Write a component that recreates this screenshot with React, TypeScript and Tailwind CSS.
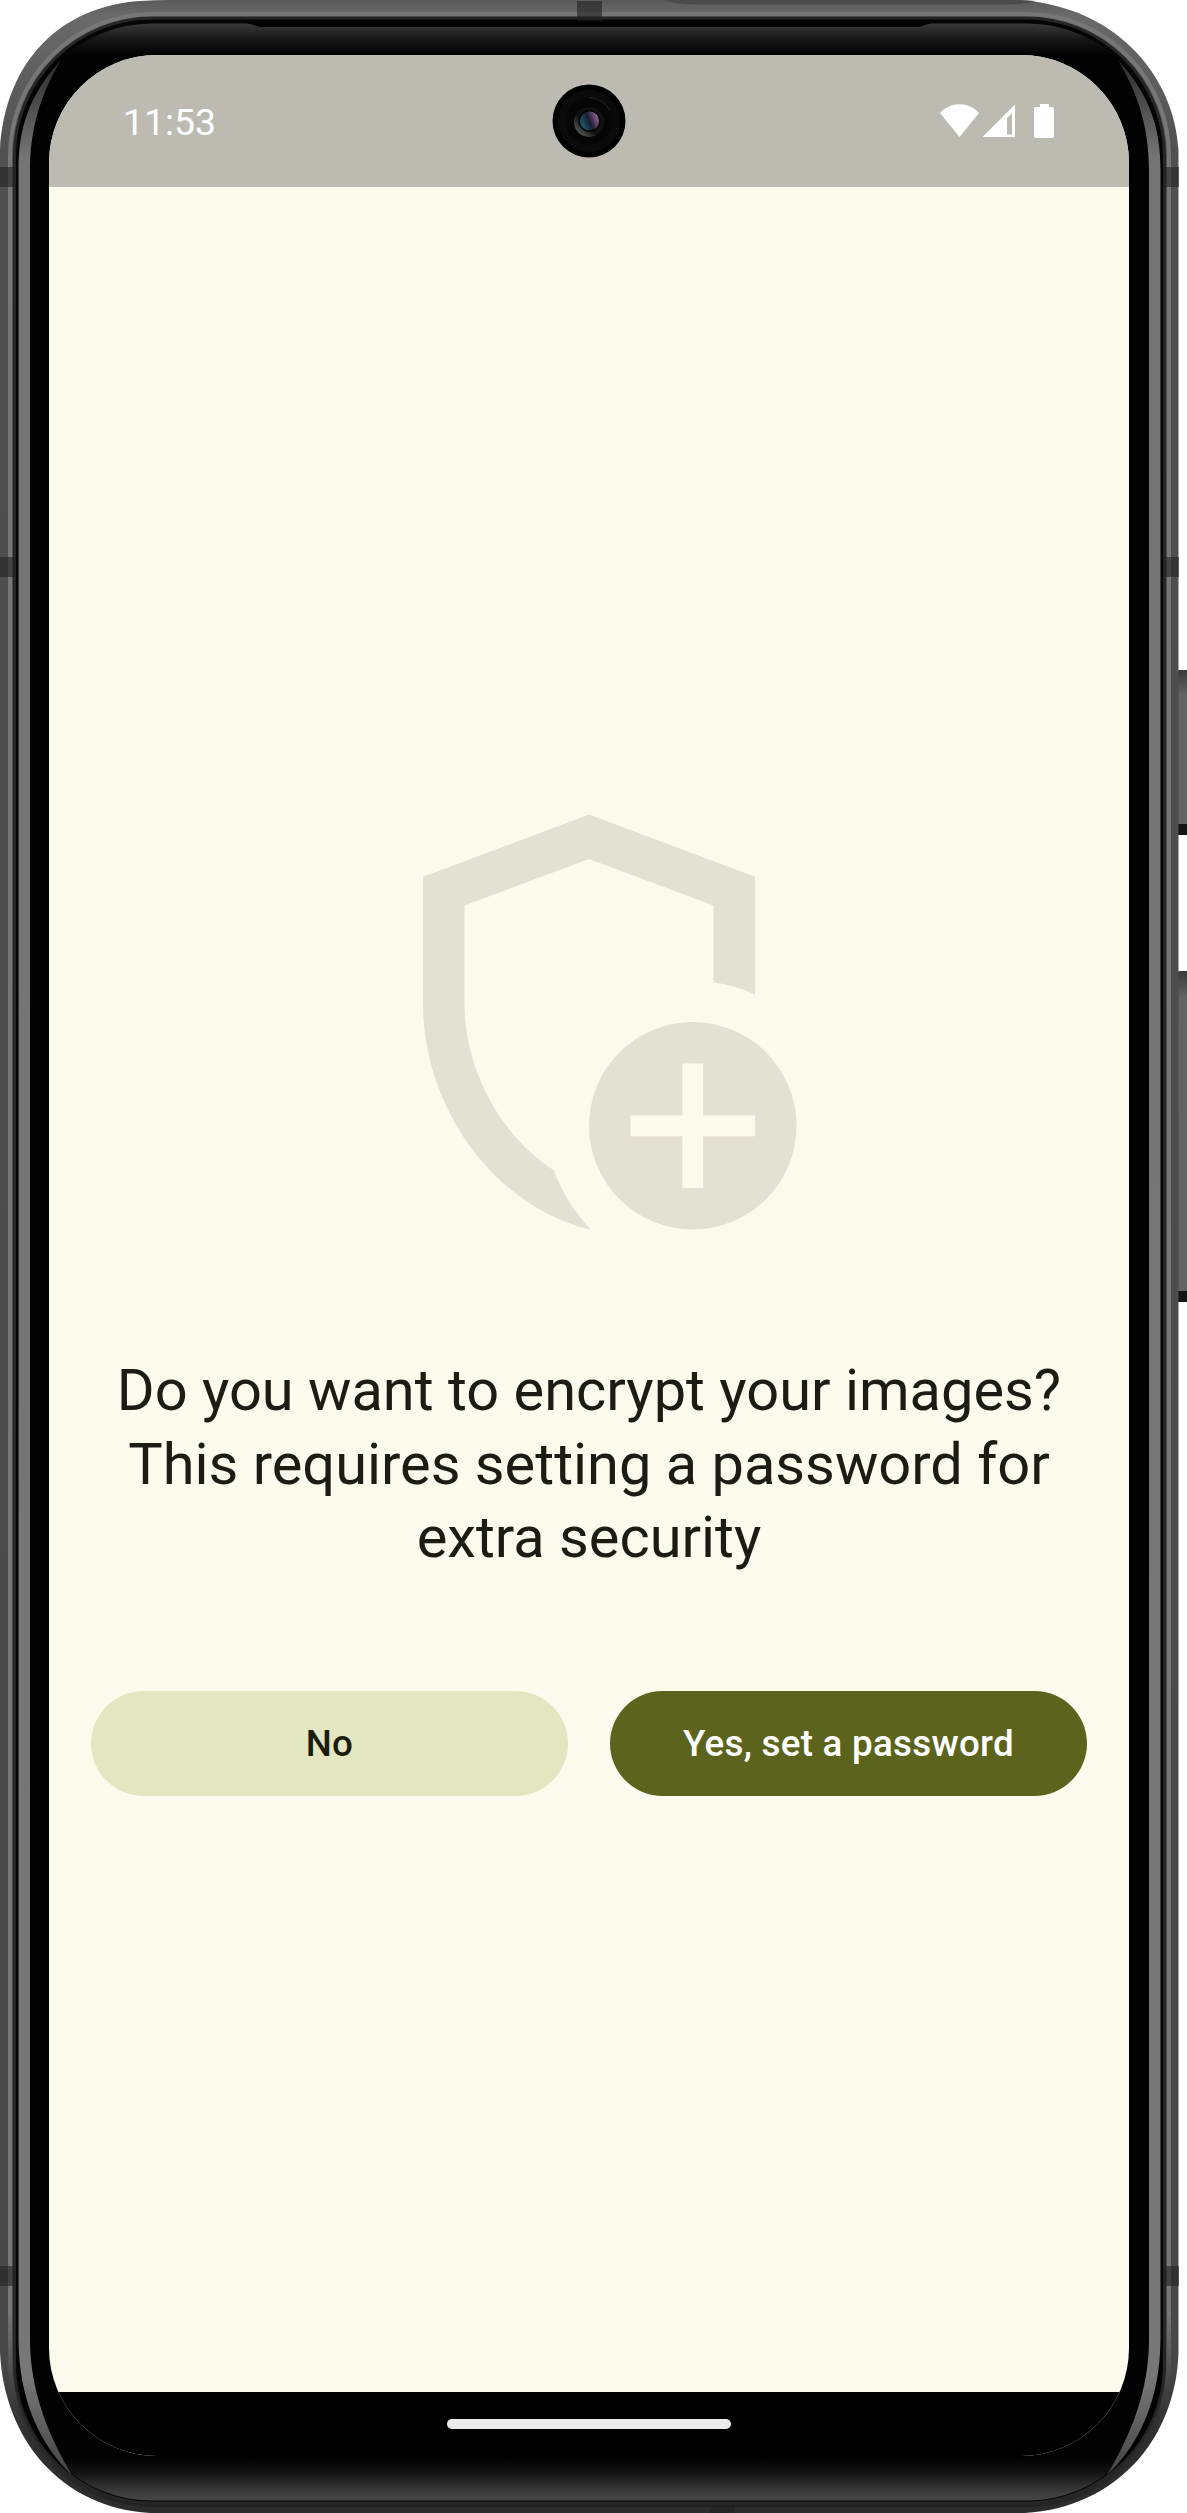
import React from "react";

const outer =
  "M140 1 Q155 0 170 0 H1015 Q1040 1 1060 7 C1130 26 1175 85 1178.5 150 V2352 C1176 2440 1115 2508 1025 2513 H150 C62 2508 4 2440 0 2352 V150 C5 60 62 6 140 1 Z";

function DeviceFrame() {
  return (
    <div className="absolute inset-0 overflow-hidden">
      <div className="absolute left-[1176px] top-[670px] h-[165px] w-[14px] rounded-[4px] bg-linear-to-b from-[#3a3a3a] via-[#636363] via-15% to-[#636363] to-90%" />
      <div className="absolute left-[1176px] top-[824px] h-[11px] w-[14px] bg-[#141414]" />
      <div className="absolute left-[1176px] top-[971px] h-[331px] w-[14px] rounded-[4px] bg-linear-to-b from-[#3a3a3a] via-[#636363] via-8% to-[#636363] to-95%" />
      <div className="absolute left-[1176px] top-[1291px] h-[11px] w-[14px] bg-[#141414]" />
      <svg width="1187" height="2513" viewBox="0 0 1187 2513" className="absolute left-0 top-0">
        <defs>
          <linearGradient id="rim" x1="0" x2="0" y1="0" y2="2513" gradientUnits="userSpaceOnUse">
            <stop offset="0" stopColor="#5a5a5a" />
            <stop offset="0.006" stopColor="#6a6a6a" />
            <stop offset="0.06" stopColor="#505050" />
            <stop offset="0.94" stopColor="#484848" />
            <stop offset="0.97" stopColor="#303030" />
            <stop offset="1" stopColor="#2c2c2c" />
          </linearGradient>
          <linearGradient id="line" x1="0" x2="0" y1="0" y2="2513" gradientUnits="userSpaceOnUse">
            <stop offset="0" stopColor="#777" />
            <stop offset="0.92" stopColor="#777" />
            <stop offset="0.96" stopColor="#333" />
            <stop offset="1" stopColor="#222" />
          </linearGradient>
          <linearGradient id="glass" x1="0" x2="0" y1="23" y2="2498" gradientUnits="userSpaceOnUse">
            <stop offset="0" stopColor="#3a3a3a" />
            <stop offset="0.007" stopColor="#151515" />
            <stop offset="0.013" stopColor="#020202" />
            <stop offset="0.984" stopColor="#020202" />
            <stop offset="0.99" stopColor="#141414" />
            <stop offset="0.995" stopColor="#303030" />
            <stop offset="1" stopColor="#444" />
          </linearGradient>
          <linearGradient id="shine" x1="0" x2="0" y1="60" y2="2475" gradientUnits="userSpaceOnUse">
            <stop offset="0" stopColor="#2c2c2c" />
            <stop offset="0.04" stopColor="#747474" />
            <stop offset="0.96" stopColor="#777" />
            <stop offset="1" stopColor="#444" />
          </linearGradient>
        </defs>
        <path d={outer} fill="url(#rim)" />
        <rect x="10" y="14" width="1159" height="2491" rx="142" fill="none" stroke="url(#line)" strokeWidth="4" />
        <rect x="14.5" y="18" width="1150" height="2485" rx="138" fill="#050505" stroke="#262626" strokeWidth="3" />
        <rect x="18" y="23.5" width="1143" height="2477" rx="134" fill="url(#glass)" />
        <path d="M61 60 C28 96 18.5 130 18.5 170 V2340 C19 2400 40 2445 72 2475 C48 2435 30 2390 30 2340 V170 C30 130 40 95 61 60Z" fill="url(#shine)" />
        <path d="M1118 60 C1151 96 1160.5 130 1160.5 170 V2340 C1160 2400 1139 2445 1107 2475 C1131 2435 1149 2390 1149 2340 V170 C1149 130 1139 95 1118 60Z" fill="url(#shine)" />
        <path d="M246 23 L260 27 H919 L931 23Z" fill="#000" />
        <path d="M662 0 Q675 4 695 4.5 H1010 Q1025 4 1036 1 L1020 0Z" fill="#4b4b4b" />
        <g fill="#222222" fillOpacity="0.6">
          <rect x="577" y="1" width="25" height="20" />
          <rect x="710" y="2505" width="25" height="8" />
          <rect x="0" y="167" width="16" height="20" />
          <rect x="1163" y="167" width="16" height="20" />
          <rect x="0" y="557" width="16" height="20" />
          <rect x="1163" y="557" width="16" height="20" />
          <rect x="0" y="2266" width="16" height="20" />
          <rect x="1163" y="2266" width="16" height="20" />
        </g>
      </svg>
    </div>
  );
}

function Camera() {
  return (
    <svg width="74" height="74" viewBox="0 0 74 74" className="absolute left-[502.5px] top-[28.5px]">
      <defs>
        <linearGradient id="lens" x1="0" y1="0.7" x2="1" y2="0.3">
          <stop offset="0" stopColor="#1c6478" />
          <stop offset="0.5" stopColor="#191a2c" />
          <stop offset="1" stopColor="#a06aa6" />
        </linearGradient>
        <linearGradient id="ring" x1="0" y1="1" x2="0.7" y2="0.3">
          <stop offset="0" stopColor="#777" />
          <stop offset="0.6" stopColor="#111" />
        </linearGradient>
      </defs>
      <circle cx="37" cy="37" r="36.5" fill="#000" />
      <circle cx="37" cy="37" r="31" fill="#0a0a0a" />
      <circle cx="37" cy="37" r="23.5" fill="#060606" />
      <path d="M37 13.5A23.5 23.5 0 0 1 58 27" fill="none" stroke="#252525" />
      <circle cx="37" cy="38" r="15" fill="url(#ring)" />
      <circle cx="37.5" cy="37" r="11" fill="#050508" />
      <circle cx="37.5" cy="37" r="9.5" fill="url(#lens)" />
    </svg>
  );
}

function StatusIcons() {
  return (
    <svg width="116" height="36" viewBox="0 0 116 36" fill="#fff">
      <path d="M1 10C11-1.8 30-1.8 40 10L20.5 34Z" />
      <path fillRule="evenodd" d="M76 1.5V34H43.5ZM73 10L68 15V31.5H73Z" />
      <path d="M101 1H110V4H113Q115 4 115 6V33Q115 35 113 35H97Q95 35 95 33V6Q95 4 97 4H101Z" />
    </svg>
  );
}

function ShieldPlus() {
  return (
    <svg width="498" height="498" viewBox="0 0 24 24" fill="#e3e1d3">
      <path d="M12 2L4 5V11.09C4 16.14 7.41 20.85 12 22L12.06 21.97C11.3 21.15 10.68 20.2 10.31 19.14C7.75 17.5 6 14.3 6 11.09V6.39L12 4.14L18 6.39V10.08C18.71 10.18 19.38 10.38 20 10.67V5Z" />
      <path fillRule="evenodd" d="M17 12A5 5 0 1 0 17 22A5 5 0 1 0 17 12ZM16.5 14H17.5V16.5H20V17.5H17.5V20H16.5V17.5H14V16.5H16.5Z" />
    </svg>
  );
}

export default function App() {
  return (
    <div className="relative h-[2513px] w-[1187px] overflow-hidden bg-white pl-[49px] pt-[55px] font-[Roboto,sans-serif]">
      <DeviceFrame />
      <main className="relative flex h-[2401px] w-[1080px] flex-col overflow-hidden rounded-[108px] bg-[#fcfaec]">
        <header className="relative flex h-[132px] shrink-0 items-center justify-between bg-[#bdbbb1] pl-[74px] pr-[74px] text-white">
          <time className="pt-px text-[37.4px] leading-[44px]">11:53</time>
          <Camera />
          <StatusIcons />
        </header>
        <section className="flex grow flex-col items-center px-[42px] pt-[586px]">
          <ShieldPlus />
          <h1 className="mt-[83px] text-center text-[57.75px] leading-[73.5px] font-normal whitespace-nowrap text-[#1c1c14]">
            Do you want to encrypt your images?
            <br />
            This requires setting a password for
            <br />
            extra security
          </h1>
          <div className="mt-[116px] grid w-full grid-cols-2 gap-[42px] text-[36.75px] font-medium tracking-[0.26px]">
            <button className="h-[105px] rounded-full bg-[#e4e6c1] pt-[2px] text-[#1b1d0a]">No</button>
            <button className="h-[105px] rounded-full bg-[#5c631d] pt-[2px] text-white">Yes, set a password</button>
          </div>
        </section>
        <footer className="flex h-[64px] shrink-0 justify-center bg-black pt-[27px]">
          <div className="h-[10px] w-[284px] rounded-full bg-[#ebebeb]" />
        </footer>
      </main>
    </div>
  );
}
